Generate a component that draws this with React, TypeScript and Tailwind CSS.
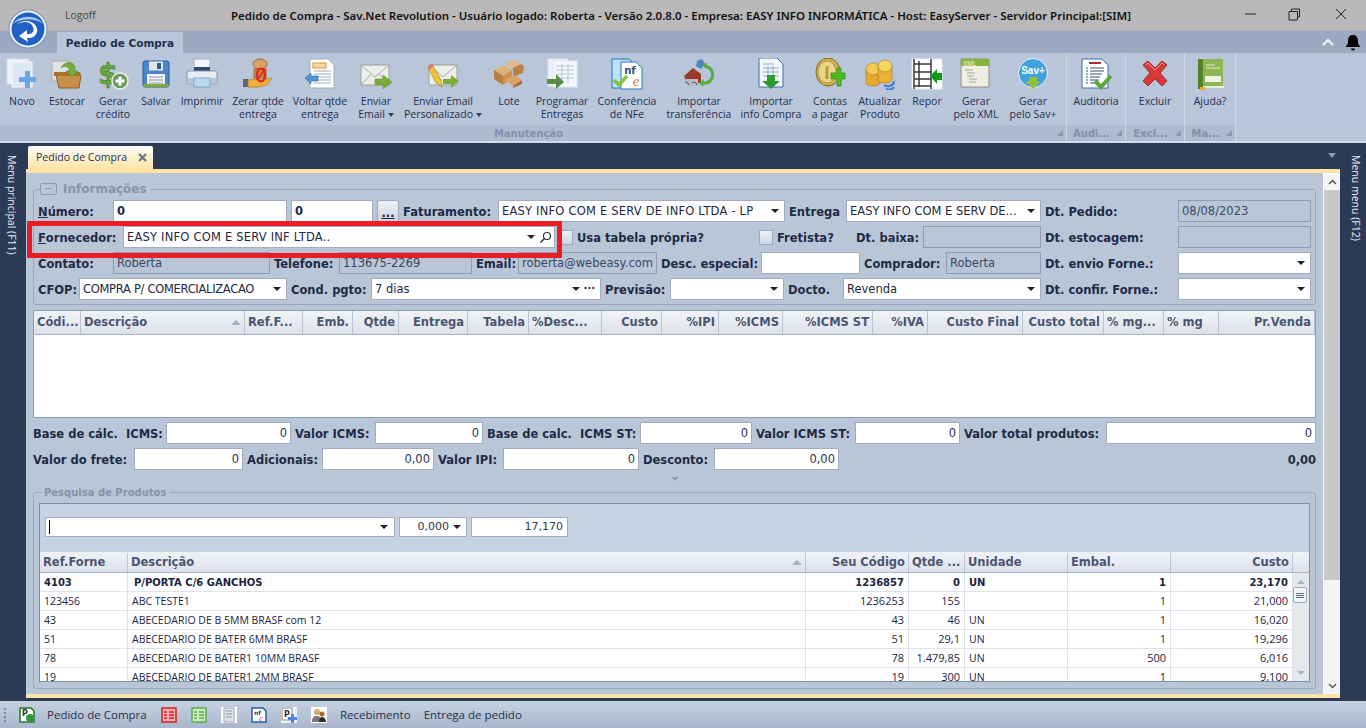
import React from "react";

const Doc = ({ x = 6, y = 2, w = 20, h = 27, fill = "#fff", stroke = "#8fa0b8" }: any) => (
  <path d={`M${x} ${y}h${w - 6}l6 6v${h - 6}h-${w}z`} fill={fill} stroke={stroke} />
);
const Lines = ({ x, y, w, n, c = "#8c98a8", s = 3 }: any) => (
  <path d={Array.from({ length: n }, (_, i) => `M${x} ${y + i * s}h${w}`).join("")} stroke={c} strokeWidth="1" />
);
const Sv = ({ children, s = 32 }: any) => (
  <svg width={s} height={s} viewBox="0 0 32 32" className="block">{children}</svg>
);

const IcoNovo = () => (
  <Sv>
    <rect x="1" y="1" width="22" height="25" fill="#eef3f9" stroke="#d8e0ea" />
    <rect x="6" y="4" width="20" height="25" fill="#dfe9f5" stroke="#f4f7fb" />
    <path d="M19 13h5v6h6v5h-6v6h-5v-6h-6v-5h6z" fill="#6aa7e6" />
  </Sv>
);
const IcoEstocar = () => (
  <Sv>
    <rect x="1" y="3" width="17" height="20" fill="#dfe2e2" stroke="#a9b0b0" />
    <path d="M5 17h25l-2 13H8z" fill="#c98f4a" stroke="#8a5a22" />
    <path d="M3 14h26l1 4H3z" fill="#a9702f" />
    <path d="M12 7c6-5 13-2 12 6h3l-6 6-6-6h4c0-4-5-6-9-3z" fill="#72ad3d" stroke="#4d7f22" strokeWidth=".6" />
  </Sv>
);
const IcoCredito = () => (
  <Sv>
    <text x="11" y="26" fontFamily="'DejaVu Sans', sans-serif" fontWeight="700" fontSize="28" fill="#62a842" textAnchor="middle" stroke="#3f7f2e" strokeWidth=".6">$</text>
    <circle cx="23" cy="23" r="8" fill="#6c9a5d" stroke="#eaf2e6" strokeWidth="1.5" />
    <path d="M21.5 18.5h3v3h3v3h-3v3h-3v-3h-3v-3h3z" fill="#fff" />
  </Sv>
);
const IcoSalvar = () => (
  <Sv>
    <rect x="3" y="3" width="26" height="26" rx="2" fill="#4a86c8" stroke="#2b5c96" />
    <rect x="9" y="3.5" width="14" height="9" fill="#dfe6ee" />
    <rect x="17" y="5" width="4" height="6" fill="#34618f" />
    <rect x="7" y="16" width="18" height="13" fill="#f3f5f7" />
    <Lines x={9} y={19} w={14} n={3} c="#8896a8" />
    <rect x="3.5" y="26" width="25" height="3" fill="#7bab38" />
  </Sv>
);
const IcoImprimir = () => (
  <Sv>
    <rect x="8" y="1" width="16" height="12" fill="#f3f5f8" stroke="#a7b2c2" />
    <rect x="8" y="9" width="16" height="4" fill="#33496b" />
    <path d="M3 13h26q2 0 2 2v9q0 2-2 2H3q-2 0-2-2v-9q0-2 2-2z" fill="#e8edf3" stroke="#8997ab" />
    <rect x="2" y="20" width="28" height="5" fill="#b9c5d5" />
    <rect x="8" y="20" width="16" height="9" fill="#bcd9f2" stroke="#7ea3c4" />
  </Sv>
);
const IcoZerar = () => (
  <Sv>
    <ellipse cx="18" cy="6" rx="7" ry="5" fill="#d9a468" stroke="#a3682e" />
    <rect x="12" y="11" width="12" height="9" fill="#c78a44" stroke="#a3682e" />
    <path d="M1 21h5v8H1z" fill="#5d6470" />
    <path d="M6 22l8-1 6 1 10-2-5 7-9 2H6z" fill="#f0b03f" stroke="#b27a1d" strokeWidth=".7" />
    <ellipse cx="19" cy="17" rx="4" ry="6.5" fill="none" stroke="#e8201f" strokeWidth="2.2" />
    <path d="M15 22l8-11" stroke="#e8201f" strokeWidth="1.5" />
  </Sv>
);
const IcoVoltar = () => (
  <Sv>
    <Doc x={6} y={1} w={24} h={29} stroke="#a5afbb" />
    <rect x="9" y="5" width="13" height="5" fill="#f6d9a5" stroke="#e8912c" />
    <Lines x={10} y={13} w={17} n={5} c="#a3a9b1" />
    <path d="M1 20l6-5v3h7v5H7v3z" fill="#4f94d8" stroke="#2c69a8" strokeWidth=".6" />
  </Sv>
);
const IcoEmail = () => (
  <Sv>
    <rect x="1" y="7" width="28" height="20" fill="#eceee9" stroke="#9aa09a" />
    <path d="M1 7l14 12L29 7M1 27l10-11M29 27L19 16" fill="none" stroke="#a9aea8" />
    <path d="M15 21h8v-4l9 7-9 7v-4h-8z" fill="#79ad37" stroke="#5f8f26" strokeWidth=".5" />
  </Sv>
);
const IcoEmailP = () => (
  <Sv>
    <rect x="2" y="7" width="28" height="20" fill="#eceee9" stroke="#9aa09a" />
    <path d="M2 7l14 12L30 7" fill="none" stroke="#a9aea8" />
    <path d="M16 21h8v-4l8 6-8 7v-4h-8z" fill="#79ad37" />
    <path d="M1 9l4-3 9 16 1 7-6-4z" fill="#f3c33b" stroke="#a07b1c" strokeWidth=".6" />
    <path d="M1 9l4-3 1.500 2.500-4 3z" fill="#e76f8c" />
  </Sv>
);
const IcoLote = () => (
  <Sv>
    <path d="M1 12l9-5 9 5-9 6z" fill="#dfb27a" />
    <path d="M1 12v9l9 6v-9z" fill="#b77f42" />
    <path d="M10 18v9l9-6v-9z" fill="#c99353" />
    <path d="M12 6l8-4 8 4-8 4z" fill="#e2b884" />
    <path d="M20 10v9l10-4 1-7-3-2z" fill="#b98146" />
    <path d="M12 22l9-5 8 5-9 6z" fill="#d7a667" />
    <path d="M20 28v2l9-4v-4z" fill="#a46f35" />
  </Sv>
);
const IcoProgramar = () => (
  <Sv>
    <rect x="2" y="1" width="20" height="27" fill="#eaf1f8" stroke="#d9e3ee" />
    <rect x="7" y="3" width="24" height="26" fill="#f4f7fb" stroke="#e1e8f1" />
    <path d="M10 8h18M10 12h18M10 16h18M10 20h18M16 6v20M22 6v20" stroke="#b8c6d6" />
    <path d="M1 21h9v-5l8 8-8 7v-5H1z" fill="#5c8c4a" />
  </Sv>
);
const IcoNfe = () => (
  <Sv>
    <Doc x={1} y={1} w={23} h={29} fill="#bfe0f5" stroke="#1f78c8" />
    <Doc x={10} y={4} w={21} h={27} stroke="#1f78c8" />
    <text x="19" y="16" fontFamily="'DejaVu Sans', sans-serif" fontWeight="700" fontSize="10" fill="#2a4f80" textAnchor="middle">nf</text>
    <text x="25" y="28" fontFamily="'Liberation Serif', serif" fontStyle="italic" fontSize="14" fill="#e2702b" textAnchor="middle">e</text>
    <path d="M3 22l5 5 8-9" fill="none" stroke="#86c43c" strokeWidth="3.500" />
  </Sv>
);
const IcoTransf = () => (
  <Sv>
    <path d="M14 3l5-2 3 5-4 5-5-3z" fill="#4e82c2" />
    <path d="M1 18l9-8 8 6v9H4z" fill="#9a3a2a" />
    <path d="M3 21h12v7H3z" fill="#b7bcc2" />
    <path d="M2 24a4 4 0 014 3M9 25a3 3 0 015 2" stroke="#555" fill="none" />
    <path d="M22 8a9 9 0 016 14M28 22a9 9 0 01-9 3" fill="none" stroke="#4fb03a" strokeWidth="3" />
    <path d="M19 6l5-1-1 6zM21 21l-1 8-4-4z" fill="#4fb03a" />
  </Sv>
);
const IcoInfo = () => (
  <Sv>
    <Doc x={4} y={0} w={24} h={29} fill="#f4f7fb" stroke="#3d6db0" />
    <path d="M8 6h11M8 10h16M8 14h16M8 18h16M13 8v12M18 8v12" stroke="#8da9c8" />
    <path d="M12 17h8v6h5l-9 8-9-8h5z" fill="#2f9a2c" />
  </Sv>
);
const IcoContas = () => (
  <Sv>
    <ellipse cx="14" cy="14" rx="12" ry="14" fill="#cfb04c" stroke="#7d6a26" />
    <ellipse cx="13" cy="14" rx="9" ry="11" fill="#e6d58a" stroke="#b69a3c" />
    <path d="M13 8v13" stroke="#b69a3c" strokeWidth="3" />
    <path d="M18 15h6v-5h4v5h4v6h-4v7h-4v-7h-6z" fill="#4dbb20" stroke="#2d8a12" strokeWidth=".7" transform="translate(-1 0)" />
  </Sv>
);
const IcoAtualizar = () => (
  <Sv>
    <g stroke="#a9791a" strokeWidth=".6">
      <path d="M2 11v14a7 3 0 0014 0V11z" fill="#e5a92e" />
      <ellipse cx="9" cy="11" rx="7" ry="6" fill="#f2cd54" />
      <path d="M14 8v14a7 3 0 0014 0V8z" fill="#eab134" />
      <ellipse cx="21" cy="8" rx="7" ry="6" fill="#f5d65e" />
    </g>
    <path d="M20 27a6 5 0 0010-4M22 31a6 5 0 008-2" fill="none" stroke="#3a7dd0" strokeWidth="2" />
  </Sv>
);
const IcoRepor = () => (
  <Sv>
    <rect x="1" y="1" width="30" height="30" fill="#fff" stroke="#e9ecef" />
    <path d="M3 1v30M20 1v30M3 6h17M3 14h17M3 21h17M3 28h17M8 3v26" fill="none" stroke="#3a3a3a" strokeWidth="1.500" />
    <path d="M19 18l7-7v4h5v7h-5v4z" fill="#139a13" />
  </Sv>
);
const IcoXml = () => (
  <Sv>
    <rect x="1" y="1" width="28" height="28" rx="1" fill="#eeeee2" stroke="#8e8e82" />
    <rect x="1" y="1" width="28" height="7" fill="#83b43f" />
    <text x="3" y="7.500" fontFamily="'Liberation Sans', sans-serif" fontSize="6.500" fill="#f4f8ec">XML</text>
    <path d="M5 12h8M7 15h8M7 18h7M9 21h8M9 24h7" stroke="#a2a596" />
  </Sv>
);
const IcoSav = () => (
  <Sv>
    <circle cx="16" cy="15" r="14.500" fill="#3fa2de" stroke="#e9f3fa" strokeWidth="1" />
    <text x="16" y="16" fontFamily="'Liberation Sans', sans-serif" fontWeight="700" fontSize="10" fill="#fff" textAnchor="middle">Sav+</text>
    <path d="M12 19h8v4h4l-8 8-8-8h4z" fill="#91c03f" />
  </Sv>
);
const IcoAudit = () => (
  <Sv>
    <Doc x={2} y={1} w={26} h={29} stroke="#3d6db0" />
    <rect x="9" y="4" width="12" height="2" fill="#b02a34" />
    <path d="M10 10h14M10 13h14M10 16h12M10 19h10M10 22h9M10 25h8" stroke="#3a4f78" />
    <path d="M6 10h2M6 13h2M6 16h2M6 19h2M6 22h2M6 25h2" stroke="#3a4f78" />
    <path d="M15 23l6 6 10-11" fill="none" stroke="#5ca63a" strokeWidth="4" />
  </Sv>
);
const IcoExcluir = () => (
  <Sv>
    <path d="M4 7l5-4 7 7 7-7 5 4-7 8 7 8-5 5-7-7-7 7-5-5 7-8z" fill="#d83a3a" stroke="#9f2f2f" />
    <path d="M7 7l2-2 7 7 7-7 2 2" fill="none" stroke="#ee9999" />
  </Sv>
);
const IcoAjuda = () => (
  <Sv>
    <path d="M4 1h25v27H4z" fill="#8db652" />
    <rect x="4" y="1" width="5" height="30" fill="#548327" />
    <rect x="9" y="28" width="21" height="2" fill="#e7efd9" />
    <path d="M12 7h9M12 10h14" stroke="#e2edcf" />
    <rect x="11" y="18" width="16" height="6" fill="#eef3e0" />
    <rect x="6" y="29" width="5" height="3" fill="#f0a52e" />
  </Sv>
);

const R = ({ w, l1, l2, caret, icon }: any) => (
  <div className={`${w} flex shrink-0 flex-col items-center pt-[5px] leading-[13px]`}>
    <div className="flex h-[32px] w-[32px] items-center justify-center">{icon}</div>
    <div className="mt-[5px] text-center whitespace-nowrap">{l1}</div>
    {(l2 || caret) && (
      <div className="flex items-center text-center whitespace-nowrap">
        {l2}
        {caret && <span className="ml-[3px] h-0 w-0 border-x-[3px] border-t-[4px] border-x-transparent border-t-[#33415e]" />}
      </div>
    )}
  </div>
);

const Corner = () => (
  <span className="h-0 w-0 border-b-[6px] border-l-[6px] border-b-[#8a98b0] border-l-transparent" />
);

const Group = ({ w, label, children }: any) => (
  <div className={`${w} flex shrink-0 flex-col border-r border-[#ced7e5]`}>
    <div className="flex h-[72px] justify-center">{children}</div>
    <div className="flex h-[16px] items-center justify-center gap-[4px] bg-[#aebbd0] pl-[4px] pr-[3px] text-[10px] font-bold text-[#8290aa] font-['DejaVu_Sans',sans-serif]">
      <span className="flex-1 whitespace-nowrap text-center">{label}</span>
      <Corner />
    </div>
  </div>
);

const Ribbon = () => (
  <div className="flex h-[90px] shrink-0 border-b-2 border-[#d4dbe7] bg-[#b9c6d9] text-[10.5px] text-[#1e2d4d] font-['Open_Sans',sans-serif]">
    <Group w="w-[1067px]" label="Manutenção">
      <div className="w-[2px]" />
      <R w="w-[40px]" l1="Novo" icon={<IcoNovo />} />
      <R w="w-[50px]" l1="Estocar" icon={<IcoEstocar />} />
      <R w="w-[42px]" l1="Gerar" l2="crédito" icon={<IcoCredito />} />
      <R w="w-[44px]" l1="Salvar" icon={<IcoSalvar />} />
      <R w="w-[48px]" l1="Imprimir" icon={<IcoImprimir />} />
      <R w="w-[64px]" l1="Zerar qtde" l2="entrega" icon={<IcoZerar />} />
      <R w="w-[60px]" l1="Voltar qtde" l2="entrega" icon={<IcoVoltar />} />
      <R w="w-[52px]" l1="Enviar" l2="Email" caret icon={<IcoEmail />} />
      <R w="w-[82px]" l1="Enviar Email" l2="Personalizado" caret icon={<IcoEmailP />} />
      <R w="w-[50px]" l1="Lote" icon={<IcoLote />} />
      <R w="w-[56px]" l1="Programar" l2="Entregas" icon={<IcoProgramar />} />
      <R w="w-[74px]" l1="Conferência" l2="de NFe" icon={<IcoNfe />} />
      <R w="w-[70px]" l1="Importar" l2="transferência" icon={<IcoTransf />} />
      <R w="w-[74px]" l1="Importar" l2="info Compra" icon={<IcoInfo />} />
      <R w="w-[44px]" l1="Contas" l2="a pagar" icon={<IcoContas />} />
      <R w="w-[56px]" l1="Atualizar" l2="Produto" icon={<IcoAtualizar />} />
      <R w="w-[38px]" l1="Repor" icon={<IcoRepor />} />
      <R w="w-[60px]" l1="Gerar" l2="pelo XML" icon={<IcoXml />} />
      <R w="w-[54px]" l1="Gerar" l2="pelo Sav+" icon={<IcoSav />} />
      <div className="flex-1" />
    </Group>
    <Group w="w-[59px]" label="Audi..."><R w="w-[58px]" l1="Auditoria" icon={<IcoAudit />} /></Group>
    <Group w="w-[59px]" label="Excl..."><R w="w-[58px]" l1="Excluir" icon={<IcoExcluir />} /></Group>
    <Group w="w-[51px]" label="Ma..."><R w="w-[50px]" l1="Ajuda?" icon={<IcoAjuda />} /></Group>
  </div>
);

const Caret = () => <span className="h-0 w-0 shrink-0 border-x-[4px] border-t-[4px] border-x-transparent border-t-[#1a2233]" />;

const L = ({ children, u, right }: any) => (
  <div className={`flex h-[22px] items-center whitespace-nowrap pt-[3px] font-bold text-[#1e2a45] ${right ? "justify-end" : ""}`}>
    {u ? (<><span className="underline">{u}</span>{children}</>) : children}
  </div>
);
const I = ({ v = "", right, ro, h = "h-[22px]" }: any) => (
  <div className={`${h} flex items-center overflow-hidden whitespace-nowrap border px-[3px] pt-[2px] ${ro ? "border-[#8f9bb0] text-[#3b465f]" : "border-[#a1acc0] bg-white text-[#2b3550]"} ${right ? "justify-end" : ""}`}>
    {v}
  </div>
);
const S = ({ v = "", extra, search, cls = "" }: any) => (
  <div className={`flex h-[22px] items-center gap-[4px] whitespace-nowrap border border-[#a1acc0] bg-white pl-[3px] text-[#1d2842] ${search ? "pr-[2px]" : "pr-[5px]"}`}>
    <span className={`flex-1 pt-[2px] ${cls}`}>{v}</span>
    <Caret />
    {extra && <span className="text-[10px] leading-[8px] font-bold">···</span>}
    {search && (
      <svg width="13" height="13" viewBox="0 0 13 13">
        <circle cx="8" cy="5" r="3.500" fill="none" stroke="#333" strokeWidth="1.200" />
        <path d="M5.500 7.500L1.500 11.500" stroke="#333" strokeWidth="1.500" />
      </svg>
    )}
  </div>
);
const Cb = () => (
  <div className="flex h-[22px] items-center justify-end">
    <div className="h-[15px] w-[14px] border border-[#9ba7bb] bg-gradient-to-b from-[#eef1f5] to-[#ccd4e0]" />
  </div>
);

const H = ({ children, right, sort }: any) => (
  <div className={`flex items-center whitespace-nowrap border-r border-[#b8c3d4] px-[3px] ${right ? "justify-end" : "justify-between"}`}>
    <span>{children}</span>
    {sort && <span className="h-0 w-0 border-x-[5px] border-b-[5px] border-x-transparent border-b-[#a8b1c0]" />}
  </div>
);

const hdr = "bg-gradient-to-b from-[#eff1f5] via-[#e8ebf1] to-[#dbe0ea] font-bold text-[#4a5570] border-b border-[#a8b4c8]";

const rows = [
  ["4103", "P/PORTA C/6 GANCHOS", "1236857", "0", "UN", "1", "23,170"],
  ["123456", "ABC TESTE1", "1236253", "155", "", "1", "21,000"],
  ["43", "ABECEDARIO DE B 5MM BRASF com 12", "43", "46", "UN", "1", "16,020"],
  ["51", "ABECEDARIO DE BATER 6MM BRASF", "51", "29,1", "UN", "1", "19,296"],
  ["78", "ABECEDARIO DE BATER1 10MM BRASF", "78", "1.479,85", "UN", "500", "6,016"],
  ["19", "ABECEDARIO DE BATER1 2MM BRASF", "19", "300", "UN", "1", "9,100"],
];

const Form = () => (
  <div className="flex min-w-0 flex-1 flex-col bg-[#b9c6d8] px-[7px] font-['DejaVu_Sans',sans-serif] text-[11.5px]">
    <fieldset className="mt-[9px] rounded-[3px] border border-[#99a6bb] pb-[4px] pl-[4px] pr-[3px]">
      <legend className="ml-[2px] flex h-[14px] items-center gap-[3px] pr-[4px] text-[12px] font-bold text-[#8592ab]">
        <span className="flex h-[12px] w-[17px] items-center justify-center rounded-[2px] border border-[#8d9ab0] text-[10px] leading-none font-normal">−</span>
        <span className="ml-[3px]">Informações</span>
      </legend>
      <div className="mt-[4px] flex flex-col gap-[4px]">
        <div className="grid grid-cols-[71px_174px_82px_22px_91px_287px_53px_195px_129px_133px] gap-x-[4px]">
          <L u="N">úmero:</L>
          <div className="flex h-[22px] items-center border border-[#a1acc0] bg-white px-[3px] pt-[2px] font-bold text-[#1d2842]">0</div>
          <div className="flex h-[22px] items-center border border-[#a1acc0] bg-white px-[3px] pt-[2px] font-bold text-[#1d2842]">0</div>
          <div className="flex h-[22px] items-end justify-center rounded-[2px] border border-[#9ba7bb] bg-gradient-to-b from-[#eef1f5] to-[#ccd4e0] pb-[3px] font-bold leading-[10px] text-[#1d2842] underline">...</div>
          <L>Faturamento:</L>
          <S v="EASY INFO COM E SERV DE INFO LTDA - LP" cls="tracking-[0.2px]" />
          <L>Entrega</L>
          <S v="EASY INFO COM E SERV DE..." />
          <L>Dt. Pedido:</L>
          <I v="08/08/2023" ro />
        </div>
        <div className="relative grid grid-cols-[81px_432px_14px_177px_15px_75px_63px_118px_129px_133px] gap-x-[4px]">
          <L u="F">ornecedor:</L>
          <S v="EASY INFO COM E SERV INF LTDA.." search cls="tracking-[0.2px]" />
          <Cb />
          <L>Usa tabela própria?</L>
          <Cb />
          <L>Fretista?</L>
          <L>Dt. baixa:</L>
          <I ro />
          <L>Dt. estocagem:</L>
          <I ro />
          <div className="absolute left-[-11px] top-[-5px] h-[37px] w-[535px] border-[5px] border-[#ed1c24]" />
        </div>
        <div className="grid grid-cols-[71px_157px_61px_133px_38px_139px_96px_99px_78px_95px_129px_133px] gap-x-[4px]">
          <L>Contato:</L>
          <I v="Roberta" ro />
          <L>Telefone:</L>
          <I v="113675-2269" ro />
          <L>Email:</L>
          <I v="roberta@webeasy.com" ro />
          <L>Desc. especial:</L>
          <I />
          <L>Comprador:</L>
          <I v="Roberta" ro />
          <L>Dt. envio Forne.:</L>
          <S />
        </div>
        <div className="grid grid-cols-[37px_208px_76px_230px_61px_114px_51px_198px_129px_133px] gap-x-[4px]">
          <L>CFOP:</L>
          <S v="COMPRA P/ COMERCIALIZACAO" cls="tracking-[-0.3px]" />
          <L>Cond. pgto:</L>
          <S v="7 dias" extra />
          <L>Previsão:</L>
          <S />
          <L>Docto.</L>
          <S v="Revenda" />
          <L>Dt. confir. Forne.:</L>
          <S />
        </div>
      </div>
    </fieldset>

    <div className="mt-[5px] h-[108px] border border-[#8f9bb0] bg-white">
      <div className={`grid h-[24px] grid-cols-[47px_164px_58px_50px_46px_69px_61px_73px_60px_57px_64px_90px_55px_95px_81px_60px_55px_96px] ${hdr}`}>
        <H>Códi...</H><H sort>Descrição</H><H>Ref.F...</H><H right>Emb.</H><H right>Qtde</H><H right>Entrega</H><H right>Tabela</H><H>%Desc...</H><H right>Custo</H><H right>%IPI</H><H right>%ICMS</H><H right>%ICMS ST</H><H right>%IVA</H><H right>Custo Final</H><H right>Custo total</H><H>% mg...</H><H>% mg</H><H right>Pr.Venda</H>
      </div>
    </div>

    <div className="mt-[4px] grid grid-cols-[129px_125px_76px_108px_149px_112px_95px_105px_138px_210px] gap-x-[4px]">
      <L>Base de cálc.&nbsp; ICMS:</L><I v="0" right />
      <L>Valor ICMS:</L><I v="0" right />
      <L>Base de calc.&nbsp; ICMS ST:</L><I v="0" right />
      <L>Valor ICMS ST:</L><I v="0" right />
      <L>Valor total produtos:</L><I v="0" right />
    </div>
    <div className="mt-[4px] grid grid-cols-[97px_109px_71px_112px_61px_136px_67px_125px_1fr] gap-x-[4px]">
      <L>Valor do frete:</L><I v="0" right />
      <L>Adicionais:</L><I v="0,00" right />
      <L>Valor IPI:</L><I v="0" right />
      <L>Desconto:</L><I v="0,00" right />
      <L right>0,00</L>
    </div>
    <div className="flex h-[15px] items-center justify-center">
      <span className="mt-[3px] h-0 w-0 border-x-[4px] border-t-[4px] border-x-transparent border-t-[#8e9bb3]" />
    </div>

    <fieldset className="rounded-[3px] border border-[#99a6bb] px-[5px] pb-[6px]">
      <legend className="ml-[4px] flex h-[14px] items-center px-[1px] pr-[4px] text-[10px] font-bold text-[#8592ab]">Pesquisa de Produtos</legend>
      <div className="mt-[4px] flex h-[179px] flex-col overflow-hidden border border-[#7f8ca3] bg-[#c6d1e2]">
        <div className="flex h-[48px] shrink-0 items-start gap-[4px] pl-[5px] pt-[13px] text-[11px]">
          <div className="flex h-[20px] w-[350px] items-center justify-between border border-[#a1acc0] bg-white pl-[3px] pr-[6px]">
            <span className="h-[14px] w-[1px] bg-black" />
            <Caret />
          </div>
          <div className="flex h-[20px] w-[68px] items-center justify-end gap-[4px] border border-[#a1acc0] bg-white pr-[5px] text-[#2b3550]">0,000 <Caret /></div>
          <div className="flex h-[20px] w-[97px] items-center justify-end border border-[#a1acc0] bg-white pr-[4px] text-[#2b3550]">17,170</div>
        </div>
        <div className={`grid h-[21px] shrink-0 grid-cols-[88px_678px_103px_56px_103px_103px_122px_1fr] pt-[1px] ${hdr}`}>
          <H>Ref.Forne</H><H sort>Descrição</H><H right>Seu Código</H><H>Qtde ...</H><H>Unidade</H><H>Embal.</H><H right>Custo</H><div />
        </div>
        <div className="flex min-h-0 flex-1">
          <div className="min-w-0 flex-1 bg-white font-['Open_Sans',sans-serif] text-[#1a2440]">
            {rows.map((r, i) => {
              const rowCls = i === 0 ? "font-bold font-['DejaVu_Sans',sans-serif] text-[10px]" : "text-[10.5px]";
              return (
                <div key={r[0]} className={`grid h-[19px] grid-cols-[88px_678px_103px_56px_103px_103px_122px] border-b border-[#dde2ec] ${rowCls}`}>
                  {r.map((c, j) => {
                    const num = j === 2 || j === 3 || j >= 5;
                    return (
                      <div key={j} className={`flex items-center whitespace-nowrap border-r border-[#dde2ec] px-[4px] ${num ? "justify-end" : ""} ${i !== 0 && num ? "text-[11px]" : ""} ${i !== 0 && !num ? "pt-[2px]" : ""} ${i === 0 && j === 1 ? "pl-[6px]" : ""}`}>{c}</div>
                    );
                  })}
                </div>
              );
            })}
          </div>
          <div className="flex w-[16px] shrink-0 flex-col items-center bg-[#e6e8ec] pt-[7px] pb-[6px]">
            <span className="h-0 w-0 border-x-[4px] border-b-[4px] border-x-transparent border-b-[#a9b1bf]" />
            <div className="mt-[3px] ml-[-2px] flex h-[16px] w-[14px] flex-col items-center justify-center gap-[1px] rounded-[2px] border border-[#9ba7bb] bg-[#f2f4f7]">
              <span className="h-[1px] w-[8px] bg-[#5f6b80]" /><span className="h-[1px] w-[8px] bg-[#5f6b80]" /><span className="h-[1px] w-[8px] bg-[#5f6b80]" />
            </div>
            <div className="flex-1" />
            <span className="h-0 w-0 border-x-[4px] border-t-[4px] border-x-transparent border-t-[#a9b1bf]" />
          </div>
        </div>
      </div>
    </fieldset>
  </div>
);

const Rail = ({ text, cls }: any) => (
  <div className={`flex w-[26px] shrink-0 items-center justify-start text-[10.5px] text-[#e6ebf3] font-['Open_Sans',sans-serif] [writing-mode:vertical-rl] whitespace-nowrap ${cls}`}>
    {text}
  </div>
);

const SIco = ({ children }: any) => <svg width="16" height="16" viewBox="0 0 16 16" className="shrink-0">{children}</svg>;

const Status = () => (
  <div className="flex h-[27px] shrink-0 items-center bg-gradient-to-b from-[#c6d1e2] to-[#a9b6cb] pl-[4px] text-[11.5px] text-[#26314d] font-['Open_Sans',sans-serif]">
    <div className="flex flex-col gap-[2px]">
      {[0, 1, 2, 3].map((i) => <span key={i} className="h-[2px] w-[2px] bg-[#7a869c]" />)}
    </div>
    <div className="ml-[13px]"><SIco>
      <path d="M1 1h11l3 3v11H1z" fill="#fff" stroke="#1e7a2e" strokeWidth="1.500" />
      <text x="3" y="9" fontFamily="'DejaVu Sans',sans-serif" fontWeight="700" fontSize="8" fill="#333">P</text>
      <circle cx="11" cy="11" r="4" fill="#2c9a3c" />
    </SIco></div>
    <span className="ml-[12px] w-[114px] whitespace-nowrap">Pedido de Compra</span>
    <SIco><rect x="1" y="1" width="14" height="14" fill="#f6b2b2" stroke="#cf2027" strokeWidth="1.500" /><path d="M3 5h3M8 5h5M3 8h3M8 8h5M3 11h3M8 11h5" stroke="#cf2027" strokeWidth="1.300" /></SIco>
    <span className="w-[14px]" />
    <SIco><rect x="1" y="1" width="14" height="14" fill="#cdeac2" stroke="#5cad4a" strokeWidth="1.500" /><path d="M3 5h3M8 5h5M3 8h3M8 8h5M3 11h3M8 11h5" stroke="#5cad4a" strokeWidth="1.300" /></SIco>
    <span className="w-[14px]" />
    <SIco><rect x="0" y="0" width="16" height="16" fill="#fff" /><rect x="3" y="1" width="10" height="14" fill="#dfe4ea" stroke="#a0a8b4" /><path d="M5 4h6M5 7h6M5 10h6" stroke="#8c98a8" /></SIco>
    <span className="w-[14px]" />
    <SIco><path d="M1 1h11l3 3v11H1z" fill="#fff" stroke="#1f5fa8" strokeWidth="1.500" /><text x="3" y="8" fontFamily="'DejaVu Sans',sans-serif" fontWeight="700" fontSize="6" fill="#2a3f66">nf</text><text x="8" y="14" fontFamily="'Liberation Serif',serif" fontStyle="italic" fontSize="9" fill="#d8442b">e</text></SIco>
    <span className="w-[14px]" />
    <SIco><rect width="16" height="16" fill="#f3f4f6" /><rect x="1" y="1" width="10" height="12" fill="#fff" stroke="#8c8c8c" /><text x="3" y="10" fontFamily="'DejaVu Sans',sans-serif" fontWeight="700" fontSize="8" fill="#333">P</text><path d="M10 7h3v3h3v3h-3v3h-3v-3H7v-3h3z" fill="#4a86dc" /></SIco>
    <span className="w-[14px]" />
    <SIco><rect width="16" height="16" fill="#fff" /><circle cx="6" cy="5" r="3" fill="#d9a877" /><path d="M1 15c0-5 2-6 5-6s4 2 4 6z" fill="#777" /><circle cx="11" cy="7" r="2.500" fill="#a86a2f" /><path d="M8 15c0-3 1-5 3-5s4 2 4 5z" fill="#2a2a2a" /></SIco>
    <span className="ml-[13px] whitespace-nowrap">Recebimento</span>
    <span className="ml-[13px] whitespace-nowrap">Entrega de pedido</span>
  </div>
);

export default function App() {
  return (
    <div className="relative flex h-[728px] w-[1366px] flex-col overflow-hidden bg-[#2b3a55]">
      {/* title */}
      <div className="flex h-[31px] shrink-0 items-center bg-[#b9b9b9] font-['Noto_Sans',sans-serif] text-[11.5px] text-[#111]">
        <span className="ml-[65px] w-[166px] text-[10.5px] text-[#444] font-['Open_Sans',sans-serif]">Logoff</span>
        <span className="w-[960px] whitespace-nowrap font-semibold">Pedido de Compra - Sav.Net Revolution - Usuário logado: Roberta - Versão 2.0.8.0 - Empresa: EASY INFO INFORMÁTICA - Host: EasyServer - Servidor Principal:[SIM]</span>
        <div className="flex flex-1 items-center justify-end">
          <svg width="140" height="16" viewBox="0 0 140 16" className="mb-[3px]">
            <path d="M19 8h11" stroke="#222" />
            <path d="M63 5.500h8.500v8.500H63zM65.500 5.500V3h8v8h-2" fill="none" stroke="#222" />
            <path d="M110 3l10 10M120 3l-10 10" stroke="#222" />
          </svg>
        </div>
      </div>
      {/* tab strip */}
      <div className="flex h-[22px] shrink-0 items-end justify-between bg-[#9aa9c1] pl-[57px] pr-[5px]">
        <div className="flex h-[21px] w-[126px] items-center justify-center rounded-t-[2px] bg-[#b9c6d9] pt-[2px] font-['DejaVu_Sans',sans-serif] text-[10.5px] font-bold text-[#1f2f4d]">Pedido de Compra</div>
        <div className="flex h-[22px] items-center gap-[11px]">
          <svg width="12" height="8" viewBox="0 0 12 8"><path d="M1 7l5-5 5 5" fill="none" stroke="#e8edf4" strokeWidth="2.500" /></svg>
          <svg width="16" height="17" viewBox="0 0 16 17"><path d="M8 1c4 0 5 3 5 7 0 2 1 3 2.500 5H.5C2 11 3 10 3 8c0-4 1-7 5-7z" fill="#000" /><path d="M6 14.500h4a2 2 0 01-4 0z" fill="#000" /></svg>
        </div>
      </div>
      <Ribbon />
      {/* logo overlay */}
      <svg width="40" height="40" viewBox="0 0 40 40" className="absolute left-[8px] top-[9px]">
        <circle cx="20" cy="20" r="19.500" fill="#7d93b8" />
        <circle cx="20" cy="20" r="18.500" fill="#f2f6fc" />
        <circle cx="20" cy="20" r="16.500" fill="#1f62c4" />
        <path d="M5 15a16 11 0 0130 0c-6-6-24-6-30 0z" fill="#cfe0f7" opacity=".8" />
        <path d="M8 16c6-6 16-5 20 1 4 7-2 13-9 12l1 4-9-6 8-6 0 4c5 1 8-3 6-7-2-5-9-7-17-2z" fill="#fff" />
      </svg>
      {/* body */}
      <div className="flex min-h-0 flex-1">
        <Rail text="Menu principal (F11)" cls="pt-[12px] pr-[3px]" />
        <div className="flex min-w-0 flex-1 flex-col">
          <div className="relative flex h-[26px] shrink-0 items-end pl-[2px]">
            <div className="flex h-[23px] w-[125px] items-center justify-between rounded-t-[2px] bg-gradient-to-b from-[#fdfdfb] to-[#fde3a5] pl-[8px] pr-[6px] text-[10.5px] text-[#26314d] font-['Open_Sans',sans-serif]">
              Pedido de Compra
              <svg width="9" height="9" viewBox="0 0 9 9"><path d="M1 1l7 7M8 1L1 8" stroke="#6e7482" strokeWidth="2.200" /></svg>
            </div>
            <span className="absolute right-[4px] top-[10px] h-0 w-0 border-x-[4px] border-t-[5px] border-x-transparent border-t-[#8c9ab3]" />
          </div>
          <div className="h-[4px] shrink-0 bg-[#fde3a5]" />
          <div className="flex min-h-0 flex-1">
            <Form />
            <div className="flex w-[17px] shrink-0 flex-col items-center border-l border-white bg-[#f4f5f6]">
              <div className="flex h-[17px] items-center"><svg width="9" height="6" viewBox="0 0 9 6"><path d="M1 5l3.500-3.500L8 5" fill="none" stroke="#555" strokeWidth="1.500" /></svg></div>
              <div className="h-[390px] w-full bg-[#c8c8c8]" />
              <div className="flex-1" />
              <div className="flex h-[17px] items-center"><svg width="9" height="6" viewBox="0 0 9 6"><path d="M1 1l3.500 3.500L8 1" fill="none" stroke="#555" strokeWidth="1.500" /></svg></div>
            </div>
          </div>
          <div className="h-[4px] shrink-0 bg-[#fde3a5]" />
          <div className="h-[3px] shrink-0" />
        </div>
        <Rail text="Menu menu (F12)" cls="pt-[12px] pl-[5px]" />
      </div>
      <Status />
    </div>
  );
}
